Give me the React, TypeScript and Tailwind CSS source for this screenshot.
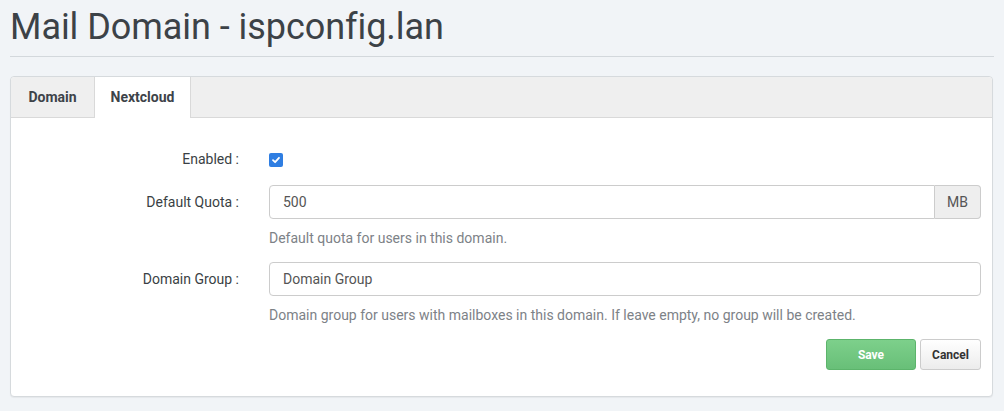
import React from "react";

export default function App() {
  return (
    <div className="min-h-[411px] w-[1004px] bg-[#f1f4f7] px-[10px] font-['Roboto','Liberation_Sans',sans-serif] text-[14px] text-[#333]">
      <h1 className="pt-[7px] pb-[9px] text-[36px] leading-[40px] font-normal tracking-[-0.05px] text-[#3c4247]">
        Mail Domain - ispconfig.lan
      </h1>
      <div className="h-px bg-[#d3d8dc]" />
      <div className="mt-[19px] mr-[1px] rounded-[4px] border border-[#d6dadd] bg-white shadow-[0_1px_1px_rgba(0,0,0,0.05)]">
        <div className="flex h-[41px] rounded-t-[4px] border-b border-[#d9d9d9] bg-[#efefef]">
          <div className="flex w-[83px] items-center justify-center text-[14px] font-bold text-[#3d4349]">
            Domain
          </div>
          <div className="-mb-px flex w-[97px] items-center justify-center border-x border-[#d9d9d9] bg-white text-[14px] font-bold text-[#3d4349]">
            Nextcloud
          </div>
        </div>
        <div className="pt-[34px] pr-[11px] pb-[26px]">
          <div className="grid grid-cols-[228px_1fr] gap-x-[30px]">
            <div className="flex h-[15px] items-center justify-end text-[#3a3f44]">Enabled :</div>
            <div className="flex h-[15px] items-center">
              <span className="flex h-[14px] w-[14px] items-center justify-center rounded-[2px] bg-[#2f7ee2]">
                <svg width="10" height="10" viewBox="0 0 10 10" fill="none">
                  <path d="M2 5.2 L4.1 7.2 L8 2.8" stroke="white" strokeWidth="1.8" strokeLinecap="round" strokeLinejoin="round" />
                </svg>
              </span>
            </div>

            <div className="mt-[18px] flex h-[34px] items-center justify-end text-[#3a3f44]">Default Quota :</div>
            <div className="mt-[18px]">
              <div className="flex h-[34px]">
                <div className="flex flex-1 items-center rounded-l-[4px] border border-[#cccccc] px-[13px] text-[#555]">500</div>
                <div className="flex w-[46px] items-center justify-center rounded-r-[4px] border border-l-0 border-[#cccccc] bg-[#eeeeee] text-[#555]">
                  MB
                </div>
              </div>
              <div className="mt-[9px] leading-[20px] text-[#7d8287]">Default quota for users in this domain.</div>
            </div>

            <div className="mt-[14px] flex h-[34px] items-center justify-end text-[#3a3f44]">Domain Group :</div>
            <div className="mt-[14px]">
              <div className="flex h-[34px] items-center rounded-[4px] border border-[#cccccc] px-[13px] text-[#555]">
                Domain Group
              </div>
              <div className="mt-[9px] leading-[20px] text-[#7d8287]">
                Domain group for users with mailboxes in this domain. If leave empty, no group will be created.
              </div>
            </div>
          </div>
          <div className="mt-[14px] flex justify-end gap-[4px]">
            <button className="h-[31px] w-[90px] rounded-[3px] border border-[#5cb46b] bg-gradient-to-b from-[#7dd08b] to-[#68bf78] text-[12px] font-bold text-white">
              Save
            </button>
            <button className="h-[31px] w-[61px] rounded-[3px] border border-[#cccccc] bg-gradient-to-b from-white to-[#ececec] text-[12px] font-bold text-[#333]">
              Cancel
            </button>
          </div>
        </div>
      </div>
    </div>
  );
}
